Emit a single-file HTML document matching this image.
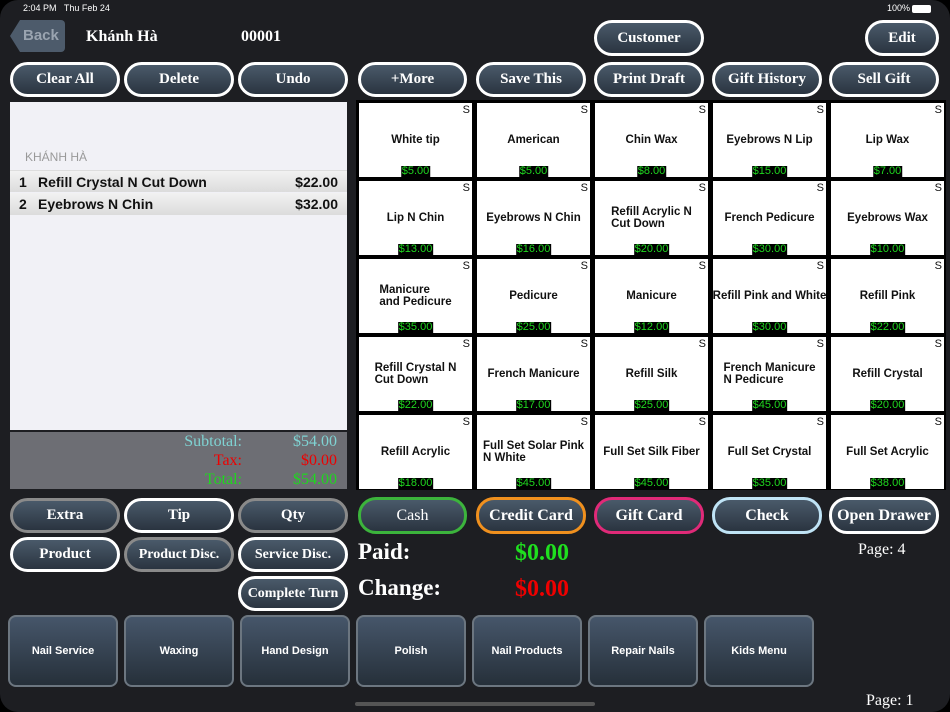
<!DOCTYPE html>
<html><head><meta charset="utf-8"><style>
*{box-sizing:border-box;margin:0;padding:0}
body{width:950px;height:712px;background:#000;overflow:hidden;position:relative;font-family:"Liberation Serif",serif}
#scr{position:absolute;left:0;top:0;width:950px;height:712px;background:#1d1e22;border-radius:18px;overflow:hidden}
.a{position:absolute}
.pill{position:absolute;border:3px solid #fff;border-radius:18px;background:linear-gradient(#4a5a6a,#2a3440);color:#fff;font-weight:bold;font-size:15px;display:flex;align-items:center;justify-content:center;font-family:"Liberation Serif",serif}
.g{border-color:#8a8a8a}
.cell{position:absolute;background:#fff;width:113px;height:74px;font-family:"Liberation Sans",sans-serif;font-weight:bold;font-size:11.5px;color:#111}
.cell .s{position:absolute;right:2px;top:1px;font-weight:normal;font-size:11px}
.cell .n{position:absolute;left:0;right:0;top:20px;height:34px;display:flex;align-items:center;justify-content:center;line-height:12px;white-space:nowrap}
.cell .n span{display:inline-block;text-align:left}
.cell .p{position:absolute;bottom:0;left:50%;transform:translateX(-50%);background:#000;color:#1fd71f;font-weight:normal;font-size:11px;padding:0 1px;line-height:11px}
.tile{position:absolute;width:110px;height:72px;border:2px solid #6c7680;border-radius:8px;background:linear-gradient(#46566a,#26303a);color:#fff;font-family:"Liberation Sans",sans-serif;font-weight:bold;font-size:11px;display:flex;align-items:center;justify-content:center}
</style></head><body><div id="scr">
<div class="a" style="left:23px;top:3px;font-family:'Liberation Sans',sans-serif;font-size:9px;color:#fff">2:04 PM &nbsp; Thu Feb 24</div>
<div class="a" style="left:887px;top:3px;font-family:'Liberation Sans',sans-serif;font-size:9px;color:#fff">100%</div>
<div class="a" style="left:912px;top:5px;width:19px;height:8px;background:#fff;border-radius:2px"></div>
<div class="a" style="left:10px;top:20px;width:55px;height:32px;background:#4d5b6b;clip-path:polygon(10px 0,100% 0,100% 100%,10px 100%,0 50%);border-radius:4px;color:#9aa4b0;font-family:'Liberation Sans',sans-serif;font-weight:bold;font-size:15px;padding:7px 0 0 13px">Back</div>
<div class="a" style="left:86px;top:28px;color:#fff;font-weight:bold;font-size:16px">Khánh Hà</div>
<div class="a" style="left:241px;top:28px;color:#fff;font-weight:bold;font-size:16px">00001</div>
<div class="pill" style="left:594px;top:20px;width:110px;height:36px">Customer</div>
<div class="pill" style="left:865px;top:20px;width:74px;height:36px">Edit</div>

<div class="pill" style="left:10px;top:62px;width:110px;height:35px">Clear All</div>
<div class="pill" style="left:124px;top:62px;width:110px;height:35px">Delete</div>
<div class="pill" style="left:238px;top:62px;width:110px;height:35px">Undo</div>
<div class="pill" style="left:358px;top:62px;width:109px;height:35px">+More</div>
<div class="pill" style="left:476px;top:62px;width:110px;height:35px">Save This</div>
<div class="pill" style="left:594px;top:62px;width:110px;height:35px">Print Draft</div>
<div class="pill" style="left:712px;top:62px;width:110px;height:35px">Gift History</div>
<div class="pill" style="left:829px;top:62px;width:110px;height:35px">Sell Gift</div>

<div class="a" style="left:10px;top:102px;width:337px;height:328px;background:#f1f1f6;font-family:'Liberation Sans',sans-serif">
<div class="a" style="left:15px;top:48px;font-size:12px;color:#999">KHÁNH HÀ</div>
<div class="a" style="left:0;top:68px;width:337px;height:22px;background:linear-gradient(#f2f2f2,#dcdcdc);border-top:1px solid #ddd;font-size:14px;color:#111;font-weight:bold"><span class="a" style="left:9px;top:3px">1</span><span class="a" style="left:28px;top:3px">Refill Crystal N Cut Down</span><span class="a" style="right:9px;top:3px">$22.00</span></div>
<div class="a" style="left:0;top:91px;width:337px;height:22px;background:linear-gradient(#f2f2f2,#dcdcdc);font-size:14px;color:#111;font-weight:bold"><span class="a" style="left:9px;top:3px">2</span><span class="a" style="left:28px;top:3px">Eyebrows N Chin</span><span class="a" style="right:9px;top:3px">$32.00</span></div>
</div>
<div class="a" style="left:10px;top:432px;width:337px;height:57px;background:#6d6e74;font-size:16px;line-height:19px">
<div class="a" style="right:105px;top:0px;text-align:right;width:100px"><span style="color:#7fd3d3">Subtotal:</span><br><span style="color:#e00">Tax:</span><br><span style="color:#1fd71f">Total:</span></div>
<div class="a" style="right:10px;top:0px;text-align:right;width:80px"><span style="color:#7fd3d3">$54.00</span><br><span style="color:#e00">$0.00</span><br><span style="color:#1fd71f">$54.00</span></div>
</div>

<div class="a" style="left:356px;top:100px;width:590px;height:390px;background:#000"></div>
<div class="cell" style="left:359px;top:103px"><span class="s">S</span><div class="n"><span>White tip</span></div><span class="p">$5.00</span></div>
<div class="cell" style="left:477px;top:103px"><span class="s">S</span><div class="n"><span>American</span></div><span class="p">$5.00</span></div>
<div class="cell" style="left:595px;top:103px"><span class="s">S</span><div class="n"><span>Chin Wax</span></div><span class="p">$8.00</span></div>
<div class="cell" style="left:713px;top:103px"><span class="s">S</span><div class="n"><span>Eyebrows N Lip</span></div><span class="p">$15.00</span></div>
<div class="cell" style="left:831px;top:103px"><span class="s">S</span><div class="n"><span>Lip Wax</span></div><span class="p">$7.00</span></div>
<div class="cell" style="left:359px;top:181px"><span class="s">S</span><div class="n"><span>Lip N Chin</span></div><span class="p">$13.00</span></div>
<div class="cell" style="left:477px;top:181px"><span class="s">S</span><div class="n"><span>Eyebrows N Chin</span></div><span class="p">$16.00</span></div>
<div class="cell" style="left:595px;top:181px"><span class="s">S</span><div class="n"><span>Refill Acrylic N<br>Cut Down</span></div><span class="p">$20.00</span></div>
<div class="cell" style="left:713px;top:181px"><span class="s">S</span><div class="n"><span>French Pedicure</span></div><span class="p">$30.00</span></div>
<div class="cell" style="left:831px;top:181px"><span class="s">S</span><div class="n"><span>Eyebrows Wax</span></div><span class="p">$10.00</span></div>
<div class="cell" style="left:359px;top:259px"><span class="s">S</span><div class="n"><span>Manicure<br>and Pedicure</span></div><span class="p">$35.00</span></div>
<div class="cell" style="left:477px;top:259px"><span class="s">S</span><div class="n"><span>Pedicure</span></div><span class="p">$25.00</span></div>
<div class="cell" style="left:595px;top:259px"><span class="s">S</span><div class="n"><span>Manicure</span></div><span class="p">$12.00</span></div>
<div class="cell" style="left:713px;top:259px"><span class="s">S</span><div class="n"><span>Refill Pink and White</span></div><span class="p">$30.00</span></div>
<div class="cell" style="left:831px;top:259px"><span class="s">S</span><div class="n"><span>Refill Pink</span></div><span class="p">$22.00</span></div>
<div class="cell" style="left:359px;top:337px"><span class="s">S</span><div class="n"><span>Refill Crystal N<br>Cut Down</span></div><span class="p">$22.00</span></div>
<div class="cell" style="left:477px;top:337px"><span class="s">S</span><div class="n"><span>French Manicure</span></div><span class="p">$17.00</span></div>
<div class="cell" style="left:595px;top:337px"><span class="s">S</span><div class="n"><span>Refill Silk</span></div><span class="p">$25.00</span></div>
<div class="cell" style="left:713px;top:337px"><span class="s">S</span><div class="n"><span>French Manicure<br>N Pedicure</span></div><span class="p">$45.00</span></div>
<div class="cell" style="left:831px;top:337px"><span class="s">S</span><div class="n"><span>Refill Crystal</span></div><span class="p">$20.00</span></div>
<div class="cell" style="left:359px;top:415px"><span class="s">S</span><div class="n"><span>Refill Acrylic</span></div><span class="p">$18.00</span></div>
<div class="cell" style="left:477px;top:415px"><span class="s">S</span><div class="n"><span>Full Set Solar Pink<br>N White</span></div><span class="p">$45.00</span></div>
<div class="cell" style="left:595px;top:415px"><span class="s">S</span><div class="n"><span>Full Set Silk Fiber</span></div><span class="p">$45.00</span></div>
<div class="cell" style="left:713px;top:415px"><span class="s">S</span><div class="n"><span>Full Set Crystal</span></div><span class="p">$35.00</span></div>
<div class="cell" style="left:831px;top:415px"><span class="s">S</span><div class="n"><span>Full Set Acrylic</span></div><span class="p">$38.00</span></div>

<div class="pill g" style="left:10px;top:498px;width:110px;height:35px">Extra</div>
<div class="pill" style="left:124px;top:498px;width:110px;height:35px">Tip</div>
<div class="pill g" style="left:238px;top:498px;width:110px;height:35px">Qty</div>
<div class="pill" style="left:10px;top:537px;width:110px;height:35px">Product</div>
<div class="pill g" style="left:124px;top:537px;width:110px;height:35px;font-size:14px">Product Disc.</div>
<div class="pill" style="left:238px;top:537px;width:110px;height:35px;font-size:14px">Service Disc.</div>
<div class="pill" style="left:238px;top:576px;width:110px;height:35px;font-size:14px">Complete Turn</div>

<div class="pill" style="left:358px;top:497px;width:109px;height:37px;border-color:#3cb43c;font-weight:normal;font-size:16px">Cash</div>
<div class="pill" style="left:476px;top:497px;width:110px;height:37px;border-color:#f0901e;font-size:16px">Credit Card</div>
<div class="pill" style="left:594px;top:497px;width:110px;height:37px;border-color:#e02a78;font-size:16px">Gift Card</div>
<div class="pill" style="left:712px;top:497px;width:110px;height:37px;border-color:#bfe3f5;font-size:16px">Check</div>
<div class="pill" style="left:829px;top:497px;width:110px;height:37px;font-size:16px">Open Drawer</div>

<div class="a" style="left:358px;top:539px;color:#fff;font-weight:bold;font-size:23px">Paid:</div>
<div class="a" style="left:358px;top:575px;color:#fff;font-weight:bold;font-size:23px">Change:</div>
<div class="a" style="left:515px;top:540px;color:#1fe01f;font-weight:bold;font-size:24px">$0.00</div>
<div class="a" style="left:515px;top:576px;color:#e00;font-weight:bold;font-size:24px">$0.00</div>
<div class="a" style="left:858px;top:541px;color:#fff;font-size:16px">Page: 4</div>
<div class="a" style="left:866px;top:692px;color:#fff;font-size:16px">Page: 1</div>

<div class="tile" style="left:8px;top:615px">Nail Service</div>
<div class="tile" style="left:124px;top:615px">Waxing</div>
<div class="tile" style="left:240px;top:615px">Hand Design</div>
<div class="tile" style="left:356px;top:615px">Polish</div>
<div class="tile" style="left:472px;top:615px">Nail Products</div>
<div class="tile" style="left:588px;top:615px">Repair Nails</div>
<div class="tile" style="left:704px;top:615px">Kids Menu</div>
<div class="a" style="left:355px;top:702px;width:240px;height:4px;border-radius:2px;background:#555"></div>
</div></body></html>
